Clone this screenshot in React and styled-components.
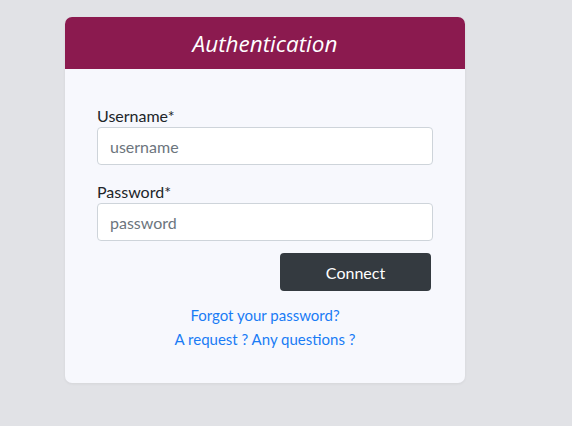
import React from 'react';
import styled, { createGlobalStyle } from 'styled-components';

const GlobalStyle = createGlobalStyle`
  body {
    margin: 0;
    background: #e1e2e6;
    font-family: "Source Sans Pro", Lato, "Noto Sans", sans-serif;
  }
`;

const Page = styled.div`
  padding: 17px 0 0 65px;
  min-height: 426px;
  box-sizing: border-box;
`;

const Card = styled.div`
  width: 400px;
  border-radius: 7px;
  overflow: hidden;
  background: #f7f8fd;
  box-shadow: 0 1px 3px rgba(0, 0, 0, 0.06);
`;

const Header = styled.div`
  height: 52px;
  background: #8b1a4f;
  display: flex;
  align-items: center;
  justify-content: center;
`;

const Title = styled.h4`
  margin: 0;
  color: #fff;
  font-family: "Open Sans", sans-serif;
  font-style: italic;
  font-weight: 400;
  font-size: 22.5px;
`;

const Body = styled.form`
  padding: 35px 32px 32px;
  display: flex;
  flex-direction: column;
`;

const Label = styled.label`
  font-size: 16px;
  line-height: 20px;
  color: #212529;
  margin: ${(p) => (p.$first ? '2px' : '17px')} 0 1px;
`;

const Input = styled.input`
  height: 38px;
  box-sizing: border-box;
  border: 1px solid #ced4da;
  border-radius: 4px;
  background: #fff;
  padding: 0 12px;
  font-family: inherit;
  font-size: 16px;
  color: #495057;
  &::placeholder {
    color: #6c757d;
  }
`;

const Actions = styled.div`
  display: flex;
  justify-content: flex-end;
  margin-top: 12px;
  padding-right: 2px;
`;

const Button = styled.button`
  width: 151px;
  height: 38px;
  border: none;
  border-radius: 4px;
  background: #343a40;
  color: #fff;
  font-family: inherit;
  font-size: 16px;
`;

const Links = styled.div`
  margin-top: 12px;
  display: flex;
  flex-direction: column;
  align-items: center;
`;

const Link = styled.a`
  color: #1a7cf5;
  font-size: 15px;
  line-height: 24px;
  text-decoration: none;
`;

const App = () => (
  <>
    <GlobalStyle />
    <Page>
      <Card>
        <Header>
          <Title>Authentication</Title>
        </Header>
        <Body onSubmit={(e) => e.preventDefault()}>
          <Label $first>Username*</Label>
          <Input placeholder="username" />
          <Label>Password*</Label>
          <Input type="password" placeholder="password" />
          <Actions>
            <Button type="submit">Connect</Button>
          </Actions>
          <Links>
            <Link href="#">Forgot your password?</Link>
            <Link href="#">A request ? Any questions ?</Link>
          </Links>
        </Body>
      </Card>
    </Page>
  </>
);

export default App;
